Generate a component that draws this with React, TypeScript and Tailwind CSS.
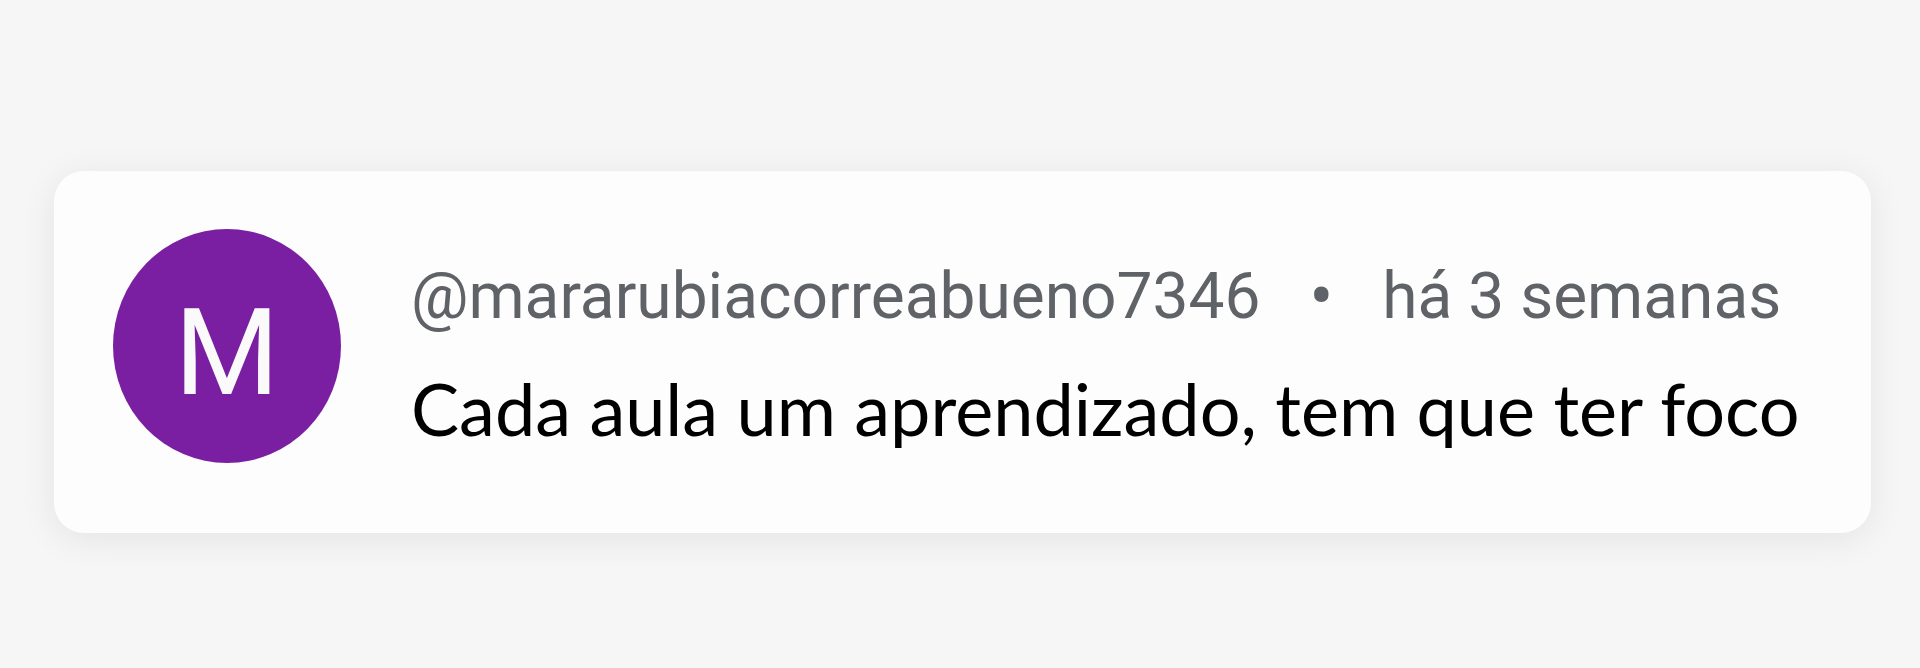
export default function App() {
  return (
    <div className="min-h-[668px] w-full bg-[#f6f6f6] pt-[171px] px-[49px]">
      <div className="ml-[5px] w-[1817px] h-[362px] rounded-[30px] bg-[#fdfdfd] shadow-[0_6px_36px_rgba(0,0,0,0.08)] flex items-start pl-[59px] pt-[58px]">
        <div className="w-[228px] h-[234px] rounded-[50%] bg-[#7b1fa2] flex items-center justify-center shrink-0">
          <span className="mt-[14px] text-[#fafafa] text-[120px] leading-none font-[Roboto,sans-serif] font-normal">M</span>
        </div>
        <div className="ml-[70px] flex flex-col pt-[28px]">
          <div className="flex items-center text-[64px] leading-[80px] text-[#5f6368] font-[Roboto,sans-serif]">
            <span>@mararubiacorreabueno7346</span>
            <span className="w-[122px] text-center text-[72px]">•</span>
            <span>há 3 semanas</span>
          </div>
          <p className="mt-[31px] text-[72px] leading-[80px] text-black font-[Lato,sans-serif]">
            Cada aula um aprendizado, tem que ter foco
          </p>
        </div>
      </div>
    </div>
  );
}
